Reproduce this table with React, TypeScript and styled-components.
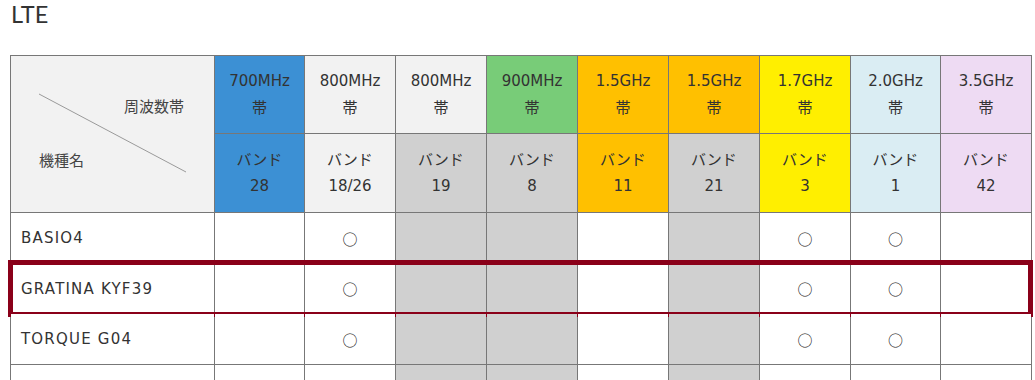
import React from "react";
import styled, { createGlobalStyle } from "styled-components";

const GlobalStyle = createGlobalStyle`
    html, body {
        margin: 0;
        padding: 0;
        background: #fff;
    }
    body {
        font-family: "DejaVu Sans", "Noto Sans CJK JP", sans-serif;
        color: #333;
    }
`;

const COLS = "203px 89px 90px 90px 90px 90px 90px 90px 89px 90px";
const LINE = "#777";
const GRAY = "#d0d0d0";

type Band = {
    freq: string;
    band: string;
    top: string;
    bottom: string;
    body: string;
};

const bands: Band[] = [
    { freq: "700MHz", band: "28", top: "#3c90d4", bottom: "#3c90d4", body: "#fff" },
    { freq: "800MHz", band: "18/26", top: "#f2f2f2", bottom: "#f2f2f2", body: "#fff" },
    { freq: "800MHz", band: "19", top: "#f2f2f2", bottom: GRAY, body: GRAY },
    { freq: "900MHz", band: "8", top: "#78cc78", bottom: GRAY, body: GRAY },
    { freq: "1.5GHz", band: "11", top: "#ffc000", bottom: "#ffc000", body: "#fff" },
    { freq: "1.5GHz", band: "21", top: "#ffc000", bottom: GRAY, body: GRAY },
    { freq: "1.7GHz", band: "3", top: "#ffef00", bottom: "#ffef00", body: "#fff" },
    { freq: "2.0GHz", band: "1", top: "#daedf3", bottom: "#daedf3", body: "#fff" },
    { freq: "3.5GHz", band: "42", top: "#eedbf3", bottom: "#eedbf3", body: "#fff" },
];

type Device = { name: string; support: boolean[]; highlight?: boolean };

const common = [false, true, false, false, false, false, true, true, false];

// the last row only peeks in at the bottom edge, so it stays empty
const devices: Device[] = [
    { name: "BASIO4", support: common },
    { name: "GRATINA KYF39", support: common, highlight: true },
    { name: "TORQUE G04", support: common },
    { name: "", support: bands.map(() => false) },
];

const Page = styled.div`
    padding: 0 10px;
`;

const Title = styled.h2`
    margin: 0 0 26px 1px;
    font-family: Lato, sans-serif;
    font-weight: 400;
    font-size: 23.5px;
    line-height: 29px;
    color: #333;
`;

const Table = styled.div`
    display: flex;
    flex-direction: column;
    gap: 1px;
    width: fit-content;
    border: 1px solid ${LINE};
    background: ${LINE};
`;

const HeadGrid = styled.div`
    display: grid;
    grid-template-columns: ${COLS};
    grid-template-rows: 77px 78px;
    gap: 1px;
`;

const Corner = styled.div`
    grid-row: 1 / span 2;
    position: relative;
    display: flex;
    flex-direction: column;
    justify-content: space-between;
    padding: 40px 30px 42px 28px;
    background: #f2f2f2;
    font-family: "Noto Sans CJK JP", sans-serif;
    font-size: 15px;
    line-height: 20px;
    color: #444;
`;

const Diagonal = styled.svg`
    position: absolute;
    inset: 0;
    width: 100%;
    height: 100%;
    pointer-events: none;
`;

const CornerLabel = styled.span<{ $end?: boolean }>`
    position: relative;
    align-self: ${(p) => (p.$end ? "flex-end" : "flex-start")};
`;

const HeadCell = styled.div<{ $bg: string }>`
    display: flex;
    flex-direction: column;
    align-items: center;
    justify-content: center;
    background: ${(p) => p.$bg};
    font-size: 15px;
    line-height: 26.5px;
    color: #333;
`;

const Row = styled.div<{ $highlight?: boolean }>`
    position: relative;
    display: grid;
    grid-template-columns: ${COLS};
    gap: 1px;
    height: 50px;

    ${(p) =>
        p.$highlight &&
        `
        height: 49px;
        &::after {
            content: "";
            position: absolute;
            top: -4px;
            bottom: -4px;
            left: -3px;
            right: -2px;
            border: 5px solid #8a0019;
            pointer-events: none;
        }
    `}
`;

const NameCell = styled.div`
    display: flex;
    align-items: center;
    padding-left: 10px;
    background: #fff;
    font-size: 15px;
    letter-spacing: 1.2px;
    color: #333;
`;

const MarkCell = styled.div<{ $bg: string }>`
    display: flex;
    align-items: center;
    justify-content: center;
    background: ${(p) => p.$bg};
    font-family: "Noto Sans CJK JP", sans-serif;
    font-size: 15px;
    color: #222;
`;

export default function App() {
    return (
        <Page>
            <GlobalStyle />
            <Title>LTE</Title>
            <Table>
                <HeadGrid>
                    <Corner>
                        <Diagonal viewBox="0 0 203 156" preserveAspectRatio="none">
                            <line x1="28" y1="38" x2="175" y2="116" stroke="#9a9a9a" strokeWidth="1" />
                        </Diagonal>
                        <CornerLabel $end>周波数帯</CornerLabel>
                        <CornerLabel>機種名</CornerLabel>
                    </Corner>
                    {bands.map((b, i) => (
                        <HeadCell key={"f" + i} $bg={b.top} style={{ gridRow: 1, gridColumn: i + 2 }}>
                            <span>{b.freq}</span>
                            <span>帯</span>
                        </HeadCell>
                    ))}
                    {bands.map((b, i) => (
                        <HeadCell key={"b" + i} $bg={b.bottom} style={{ gridRow: 2, gridColumn: i + 2 }}>
                            <span>バンド</span>
                            <span>{b.band}</span>
                        </HeadCell>
                    ))}
                </HeadGrid>
                {devices.map((d, r) => (
                    <Row key={r} $highlight={d.highlight}>
                        <NameCell>{d.name}</NameCell>
                        {bands.map((b, i) => (
                            <MarkCell key={i} $bg={b.body}>
                                {d.support[i] ? "○" : ""}
                            </MarkCell>
                        ))}
                    </Row>
                ))}
            </Table>
        </Page>
    );
}
